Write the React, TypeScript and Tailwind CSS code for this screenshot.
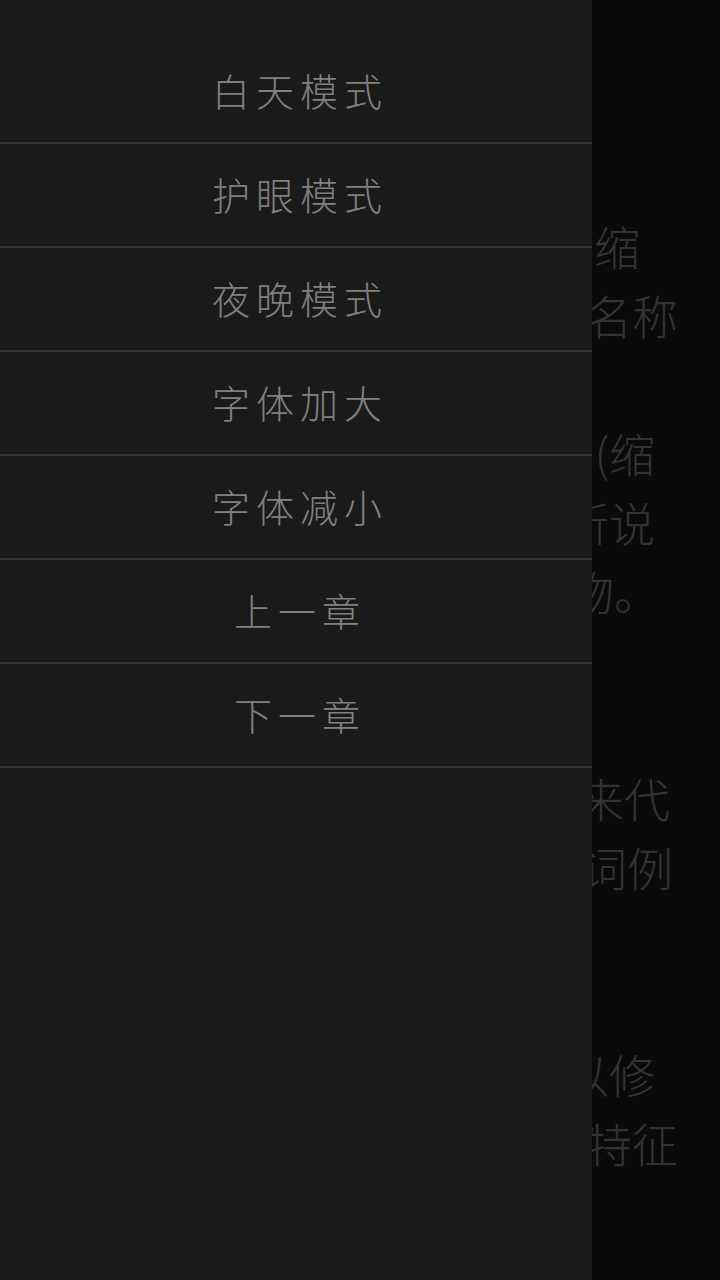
import React from "react";

const items = ["白天模式", "护眼模式", "夜晚模式", "字体加大", "字体减小", "上一章", "下一章"];

type Line = { text: string; pr: string };

const lines: (Line | null)[] = [
  { text: "简称，或称缩", pr: "pr-[80px]" },
  { text: "机构的名称", pr: "pr-[42px]" },
  null,
  { text: "略语简称(缩", pr: "pr-[65px]" },
  { text: "的是所说", pr: "pr-[65px]" },
  { text: "的某事物。", pr: "pr-[60px]" },
  null,
  null,
  { text: "通常用来代", pr: "pr-[50px]" },
  { text: "替全名词例", pr: "pr-[47px]" },
  null,
  null,
  { text: "加以修", pr: "pr-[65px]" },
  { text: "所有的特征", pr: "pr-[42px]" },
];

export default function App() {
  return (
    <div
      className="relative w-[720px] h-[1280px] overflow-hidden bg-[#0a0a0a]"
      style={{ fontFamily: '"Noto Sans CJK SC", "Noto Sans", sans-serif' }}
    >
      {/* reading page behind the drawer */}
      <div className="pt-[211px] flex flex-col text-[46px] font-light text-[#333333]">
        {lines.map((l, i) => (
          <div key={i} className={`h-[69px] leading-[69px] text-right whitespace-nowrap ${l ? l.pr : ""}`}>
            {l ? l.text : "\u00a0"}
          </div>
        ))}
      </div>

      {/* drawer */}
      <div className="absolute top-0 left-0 w-[592px] h-[1280px] bg-[#1a1a1a] pt-[40px] flex flex-col">
        {items.map((t) => (
          <div
            key={t}
            className="h-[104px] border-b-2 border-[#333333] flex items-center justify-center pb-[3px] text-[38px] font-light tracking-[6px] pl-[8px] text-[#808080]"
          >
            {t}
          </div>
        ))}
      </div>
    </div>
  );
}
